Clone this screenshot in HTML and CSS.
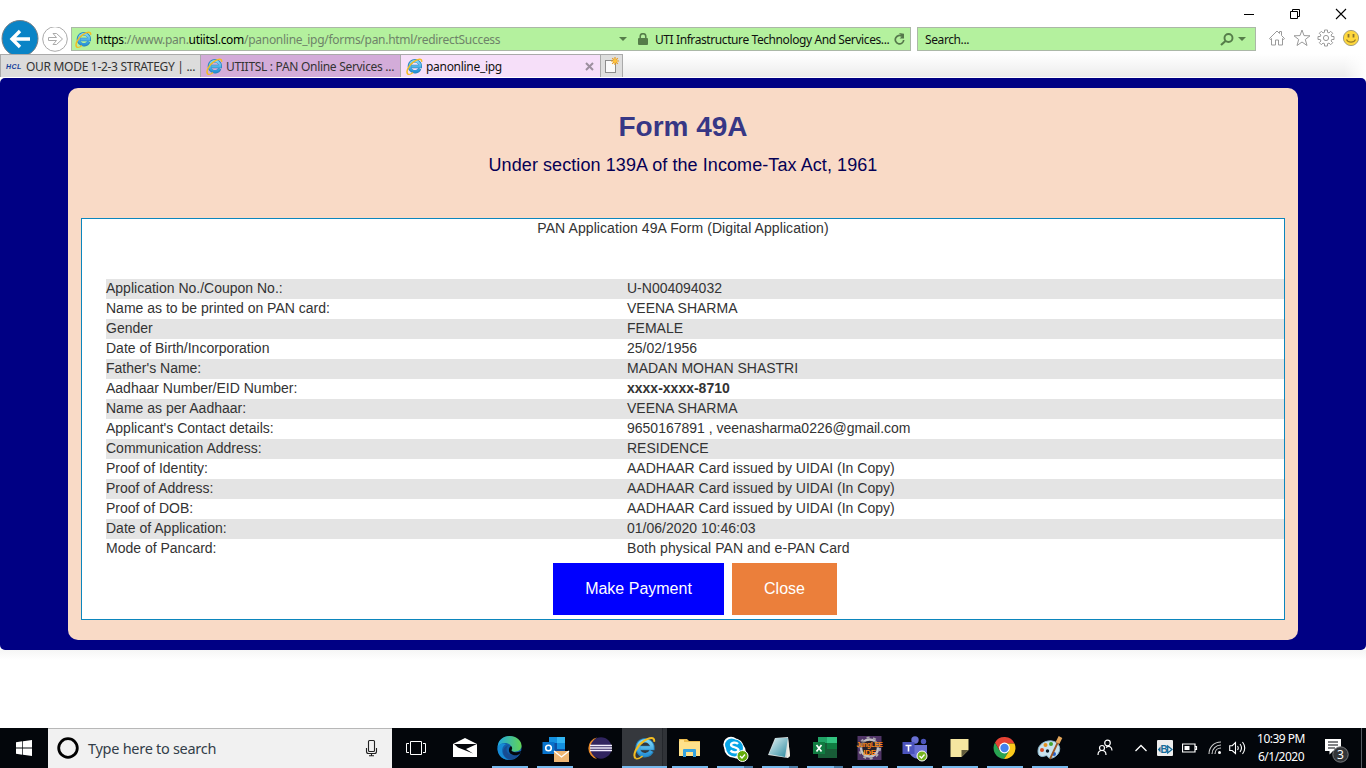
FILE: index.html
```html
<!DOCTYPE html>
<html lang="en">
<head>
<meta charset="utf-8">
<title>panonline_ipg</title>
<link rel="stylesheet" href="styles.css">
</head>
<body>
<svg class="defs" width="0" height="0">
  <defs>
    <linearGradient id="ieBlue" x1="0" y1="0" x2="0" y2="1"><stop offset="0" stop-color="#7fd6f7"/><stop offset="1" stop-color="#2a94d8"/></linearGradient>
    <linearGradient id="edgeA" x1="0" y1="0" x2="1" y2="0"><stop offset="0" stop-color="#20a8e0"/><stop offset="1" stop-color="#62d455"/></linearGradient>
    <linearGradient id="pad" x1="0" y1="0" x2="1" y2="1"><stop offset="0" stop-color="#e4f3f5"/><stop offset="1" stop-color="#2d8aa0"/></linearGradient>
    <symbol id="ie" viewBox="0 0 24 24">
      <path d="M19.500 15.200a7.800 7.800 0 1 1 .8-3.200H7" fill="none" stroke="#2484bd" stroke-width="4.600"/>
      <path d="M19 15.200a7.300 7.300 0 1 1 .9-3.200H7.500" fill="none" stroke="url(#ieBlue)" stroke-width="3.400"/>
      <path d="M3 23C-1 20 3.500 10 11 5 17 .8 23 0 22 5.500" fill="none" stroke="#f3bd22" stroke-width="2.100"/>
      <path d="M3 23c2 1 5-1 7-2.500" fill="none" stroke="#f3bd22" stroke-width="1.500"/>
    </symbol>
  </defs>
</svg>

<header class="chrome">
  <div class="window-controls">
    <svg width="12" height="12" viewBox="0 0 12 12"><path d="M1 6.500h10" stroke="#000"/></svg>
    <svg width="12" height="12" viewBox="0 0 12 12"><path d="M1.500 3.500h7v7h-7zM3.500 3.500v-2h7v7h-2" fill="none" stroke="#000"/></svg>
    <svg width="12" height="12" viewBox="0 0 12 12"><path d="M1 1l10 10M11 1L1 11" stroke="#000" stroke-width="1.100"/></svg>
  </div>

  <div class="nav">
    <svg class="back" width="40" height="34" viewBox="0 0 40 34"><circle cx="20" cy="18.500" r="18" fill="#0a84c6" stroke="#777f85" stroke-width="1"/><path d="M30 19H13M20 11l-8 8 8 8" fill="none" stroke="#fff" stroke-width="3.400"/></svg>
    <svg class="forward" width="31" height="27" viewBox="0 0 31 27"><circle cx="15" cy="12" r="12.300" fill="#fff" stroke="#aaa"/><path d="M8.500 10.500h8L13 6.500h3.500l6 5.500-6 5.500H13l3.500-4h-8z" fill="none" stroke="#aaa"/></svg>
    <div class="address">
      <svg class="fav" width="17" height="17"><use href="#ie" width="17" height="17"/></svg>
      <span class="url"><b>https</b>://www.pan.<b>utiitsl.com</b>/panonline_ipg/forms/pan.html/redirectSuccess</span>
      <svg class="caret" width="8" height="5" viewBox="0 0 8 5"><path d="M0 0h8L4 4z" fill="#557d49"/></svg>
      <svg class="lock" width="10" height="12" viewBox="0 0 10 12"><path d="M2.200 6V3.500a2.800 2.800 0 0 1 5.600 0V6" fill="none" stroke="#557d49" stroke-width="1.500"/><rect y="5" width="10" height="7" rx="1" fill="#557d49"/></svg>
      <span class="issuer">UTI Infrastructure Technology And Services...</span>
      <svg class="reload" width="11" height="13" viewBox="0 0 11 13"><path d="M8 3.300A4.200 4.200 0 1 0 9.700 7" fill="none" stroke="#55784b" stroke-width="1.700"/><path d="M5 0l5 .8V5.500H5.600L8 3.200z" fill="#55784b"/></svg>
    </div>
    <div class="search">
      <span class="search-label">Search...</span>
      <svg width="14" height="13" viewBox="0 0 14 13"><circle cx="8.500" cy="5" r="4" fill="none" stroke="#557d49" stroke-width="1.900"/><path d="M5.500 8L1 12" stroke="#557d49" stroke-width="2.200"/></svg>
      <svg class="search-caret" width="8" height="5" viewBox="0 0 8 5"><path d="M0 0h8L4 4z" fill="#557d49"/></svg>
    </div>
    <div class="tools">
      <svg width="18" height="18" viewBox="0 0 18 18"><path d="M1.500 9.500L9 2l2.500 2.500V2.500h2v4l3 3-.8 1-1.200-1v6.500h-4v-5h-3v5h-4V9.500l-1.200 1z" fill="#fff" stroke="#9a9a9a"/></svg>
      <svg width="18" height="18" viewBox="0 0 18 18"><path d="M9 1l2 5.600 6 .2-4.700 3.700L14 16.500l-5-3.500-5 3.500 1.700-6L1 6.800l6-.2z" fill="#fff" stroke="#9a9a9a"/></svg>
      <svg width="18" height="18" viewBox="0 0 18 18"><path d="M7.500 1h3v2.300l1.500.6 1.700-1.600 2 2-1.600 1.700.6 1.500H17v3h-2.300l-.6 1.500 1.600 1.700-2 2-1.700-1.600-1.500.6V17h-3v-2.300L6 14.100l-1.700 1.600-2-2L3.900 12l-.6-1.500H1v-3h2.300L3.900 6 2.300 4.300l2-2L6 3.900l1.500-.6z" fill="#fff" stroke="#9a9a9a"/><circle cx="9" cy="9" r="2.600" fill="none" stroke="#9a9a9a"/></svg>
      <svg width="18" height="18" viewBox="0 0 18 18"><circle cx="9" cy="9" r="7.600" fill="#ffd83d" stroke="#a6a07c"/><path d="M6.500 5v3.500M11.500 5v3.500" stroke="#8a7430" stroke-width="1.800"/><path d="M4.500 10.500c1.500 3.500 7.500 3.500 9 0" fill="none" stroke="#9a7c25" stroke-width="1.100"/></svg>
    </div>
  </div>

  <div class="tabs">
    <div class="tab tab-grey"><span class="hcl">HCL</span><span class="tab-text t1">OUR MODE 1-2-3 STRATEGY | ...</span></div>
    <div class="tab tab-purple"><svg width="17" height="17"><use href="#ie" width="17" height="17"/></svg><span class="tab-text t2">UTIITSL : PAN Online Services ...</span></div>
    <div class="tab tab-active"><svg width="17" height="17"><use href="#ie" width="17" height="17"/></svg><span class="tab-text t3">panonline_ipg</span><svg class="tab-close" width="9" height="9" viewBox="0 0 9 9"><path d="M1 1l7 7M8 1L1 8" stroke="#9c8f9e" stroke-width="2"/></svg></div>
    <div class="new-tab"><svg width="16" height="17" viewBox="0 0 16 17"><rect x="1.500" y="3.500" width="10" height="12" fill="#fafafa" stroke="#8d8d8d"/><path d="M11 0v8M7 4h8M8.200 1.200l5.600 5.600M13.800 1.200L8.200 6.800" stroke="#e79a1c" stroke-width="1.200"/><circle cx="11" cy="4" r="2" fill="#ffc43c"/></svg></div>
    <div class="tab-strip"></div>
  </div>
</header>

<main class="page">
  <section class="card">
    <h1>Form 49A</h1>
    <p class="subtitle">Under section 139A of the Income-Tax Act, 1961</p>
    <div class="panel">
      <p class="panel-title">PAN Application 49A Form (Digital Application)</p>
      <dl class="details">
        <div class="row"><dt>Application No./Coupon No.:</dt><dd>U-N004094032</dd></div>
        <div class="row"><dt>Name as to be printed on PAN card:</dt><dd>VEENA SHARMA</dd></div>
        <div class="row"><dt>Gender</dt><dd>FEMALE</dd></div>
        <div class="row"><dt>Date of Birth/Incorporation</dt><dd>25/02/1956</dd></div>
        <div class="row"><dt>Father's Name:</dt><dd>MADAN MOHAN SHASTRI</dd></div>
        <div class="row"><dt>Aadhaar Number/EID Number:</dt><dd class="strong">xxxx-xxxx-8710</dd></div>
        <div class="row"><dt>Name as per Aadhaar:</dt><dd>VEENA SHARMA</dd></div>
        <div class="row"><dt>Applicant's Contact details:</dt><dd>9650167891 , veenasharma0226@gmail.com</dd></div>
        <div class="row"><dt>Communication Address:</dt><dd>RESIDENCE</dd></div>
        <div class="row"><dt>Proof of Identity:</dt><dd>AADHAAR Card issued by UIDAI (In Copy)</dd></div>
        <div class="row"><dt>Proof of Address:</dt><dd>AADHAAR Card issued by UIDAI (In Copy)</dd></div>
        <div class="row"><dt>Proof of DOB:</dt><dd>AADHAAR Card issued by UIDAI (In Copy)</dd></div>
        <div class="row"><dt>Date of Application:</dt><dd>01/06/2020 10:46:03</dd></div>
        <div class="row"><dt>Mode of Pancard:</dt><dd class="mode">Both physical PAN and e-PAN Card</dd></div>
      </dl>
      <div class="actions">
        <button class="btn pay">Make Payment</button>
        <button class="btn close">Close</button>
      </div>
    </div>
  </section>
</main>

<div class="below"></div>

<footer class="taskbar">
  <div class="start"><svg width="16" height="16" viewBox="0 0 16 16"><path d="M0 2.200l6.300-.9v6.300H0zM7 1.200L16 0v7.600H7zM0 8.400h6.300v6.300L0 13.800zM7 8.400h9V16l-9-1.200z" fill="#fff"/></svg></div>
  <div class="task-search">
    <svg width="24" height="24" viewBox="0 0 24 24"><circle cx="12" cy="12" r="9.300" fill="none" stroke="#000" stroke-width="2.800"/></svg>
    <span class="task-search-text">Type here to search</span>
    <svg class="mic" width="13" height="18" viewBox="0 0 13 18"><rect x="3.500" y="1.500" width="6" height="11" rx="1" fill="none" stroke="#222" stroke-width="1.100"/><path d="M1.500 9v3.500q0 2 2 2h6q2 0 2-2V9M6.500 14.500v2.500M4 16.700h5" fill="none" stroke="#222" stroke-width="1.100"/></svg>
  </div>
  <div class="task view"><svg width="20" height="16" viewBox="0 0 20 16"><path d="M4.500 1.500h11v13h-11zM3 3.500H.5v9H3M17 3.500h2.500v9H17" fill="none" stroke="#fff"/></svg></div>
  <div class="task"><svg width="45" height="40" viewBox="0 0 45 40"><path d="M11 16l12-6 12 6v13H11z" fill="#fff"/><path d="M12 16h23L24 21l7 4.500-15-6z" fill="#05070c"/></svg></div>
  <div class="task open"><svg width="45" height="40" viewBox="0 0 45 40"><circle cx="22.500" cy="20" r="12" fill="#1160ab"/><path d="M10.700 19C11 12 16 8 22.500 8 30 8 35 13 34.500 18.500c-.5 5-7 6-10 4.500-1.500-1 1-2-.5-5-2-4-10-4.500-13.300 1z" fill="url(#edgeA)"/><path d="M19 16c-6 3-5 13 3 15.900C14 32 9.500 25 10.700 19c1-3 5-4.500 8.300-3z" fill="#168bd6"/><path d="M23 17c-5 1-5 9 2 10 3 .5 6-.8 8-2-4 8-13 8-16 2-2.500-5 1-10 6-10z" fill="#174c92"/><path d="M24 18c3 3-1 4 1.500 5.500 2 1.200 5 .8 9-.5L33 25.500c-2 2-6 2.500-9 .5-3-2-2.500-6.500 0-8z" fill="#05070c"/></svg></div>
  <div class="task open"><svg width="45" height="40" viewBox="0 0 45 40"><path d="M17 9h16v15H17z" fill="#0d4fa3"/><path d="M17 9h8v6h-8zM25 15h8v6h-8z" fill="#1490df"/><path d="M25 9h8v6h-8z" fill="#32b5f3"/><rect x="10.500" y="14" width="12" height="12" fill="#0873cc"/><circle cx="16.500" cy="20" r="2.800" fill="none" stroke="#fff" stroke-width="1.600"/><path d="M22 23h15v11H22z" fill="#efb774"/><path d="M22 23l7.500 6 7.500-6" fill="none" stroke="#fff" stroke-width="1.300"/></svg></div>
  <div class="task"><svg width="45" height="40" viewBox="0 0 45 40"><path d="M20 9.500a11 11 0 0 0 0 21.500c-7-5-7-17 0-21.500z" fill="#e98b2b"/><circle cx="24" cy="20" r="10.700" fill="#30245f"/><path d="M13 17.500h22M13 20h22M13 22.500h22" stroke="#f4efff" stroke-width="1.300"/></svg></div>
  <div class="task current"><svg width="28" height="28"><use href="#ie" x="2" y="2" width="23" height="24"/></svg></div>
  <div class="task open"><svg width="45" height="40" viewBox="0 0 45 40"><path d="M12 11h8l2 2h11v15H12z" fill="#edbd4f"/><path d="M13 12h4v2h16v14H12V14z" fill="#ffe18a"/><path d="M16 29v-7q0-1 1-1h11q1 0 1 1v7h-3v-5h-7v5z" fill="#36a3df"/></svg></div>
  <div class="task open stacked"><svg width="45" height="40" viewBox="0 0 45 40"><circle cx="19" cy="16.500" r="7.700" fill="#fff"/><circle cx="26" cy="23" r="7.700" fill="#fff"/><circle cx="22" cy="20" r="9.800" fill="#fff"/><circle cx="19.500" cy="17" r="6.500" fill="#08a5e7"/><circle cx="22.500" cy="20" r="8.500" fill="#08a5e7"/><path d="M26 16c-2-2.500-7-1.500-7 1s7.500 2 7.500 5-6 3-8 .5" fill="none" stroke="#fff" stroke-width="2.300"/><circle cx="30.500" cy="28" r="5.500" fill="#65ac0c" stroke="#fff"/><path d="M28 28l2 2 3-3.500" fill="none" stroke="#fff" stroke-width="1.300"/></svg></div>
  <div class="task open stacked"><svg width="45" height="40" viewBox="0 0 45 40"><path d="M18 10l13-1 2 19-2 2-20-3z" fill="#d6dddf"/><path d="M19 10h12l-3 19-16-3z" fill="url(#pad)"/><path d="M31 10l2 18-3 2z" fill="#f1eee2"/></svg></div>
  <div class="task open stacked"><svg width="45" height="40" viewBox="0 0 45 40"><path d="M16 9h19v21H16z" fill="#185c37"/><path d="M16 9h9v6h-9z" fill="#21a366"/><path d="M25 9h10v6H25z" fill="#33c481"/><path d="M25 15h10v6H25z" fill="#107c41"/><rect x="11" y="14" width="12" height="12" fill="#107c41"/><path d="M14.500 17l5 6.500M19.500 17l-5 6.500" stroke="#fff" stroke-width="1.700"/></svg></div>
  <div class="task open"><svg width="45" height="40" viewBox="0 0 45 40"><rect x="10.500" y="8" width="24" height="24" fill="#503567"/><circle cx="22.500" cy="20" r="8.500" fill="#24212b" stroke="#c3c1c4" stroke-width="2.500"/><circle cx="22.500" cy="20" r="10.500" fill="none" stroke="#aaa7ad" stroke-width="2" stroke-dasharray="3 3.600"/><path d="M11 13.500h23v6H11z" fill="#24212b" opacity=".6"/><text x="22.500" y="18.800" class="ide">JungLEE</text><text x="22.500" y="26.500" class="ide ide-big">IDE</text></svg></div>
  <div class="task open"><svg width="45" height="40" viewBox="0 0 45 40"><circle cx="23" cy="12" r="3.700" fill="#6970d3"/><circle cx="31.500" cy="13.500" r="2.700" fill="#4c55bd"/><path d="M18 17h11v12q-6 4-11-3zM29 17h6v7q-1 5-6 3z" fill="#6970d3"/><rect x="10.500" y="14" width="12" height="12" fill="#4b53bc"/><path d="M13.500 17.500h6M16.500 17.500v6" stroke="#fff" stroke-width="1.600"/><circle cx="30" cy="28" r="5" fill="#75b420" stroke="#fff"/><path d="M27.500 28l2 2 3-3.500" fill="none" stroke="#fff" stroke-width="1.300"/></svg></div>
  <div class="task open"><svg width="45" height="40" viewBox="0 0 45 40"><path d="M13.500 11h18v11l-7 7h-11z" fill="#f5e6a0"/><path d="M31.500 22h-7v7z" fill="#615b3b"/></svg></div>
  <div class="task open"><svg width="45" height="40" viewBox="0 0 45 40"><path d="M22.500 20l4.760 2.750L22 31A11 11 0 0 1 13 14.500l4.740 8.250z" fill="#29a352"/><path d="M13 14.500A11 11 0 0 1 32.500 15.500H22.500l-4.760 7.250z" fill="#e64335"/><path d="M22.500 15.500h10A11 11 0 0 1 22 31l5.200-8.200z" fill="#fbc91b"/><circle cx="22.500" cy="20" r="5.400" fill="#fff"/><circle cx="22.500" cy="20" r="4.200" fill="#4382ed"/></svg></div>
  <div class="task open"><svg width="45" height="40" viewBox="0 0 45 40"><path d="M11 23c0-7 8-11 14-10 8 1 10 9 5 14-4 4-8 4-9 2-1-3-4 0-6-.500-3-.5-4-2-4-5.500z" fill="#c8e2ee" stroke="#8bb8ce"/><circle cx="15" cy="22" r="2" fill="#db4b25"/><circle cx="18.500" cy="17" r="2" fill="#e39120"/><circle cx="24" cy="16" r="2" fill="#43a42e"/><circle cx="27" cy="26" r="2" fill="#275fc9"/><circle cx="20.500" cy="23" r="1.700" fill="#0b1a26"/><path d="M31 14l-8 17" stroke="#9b5724" stroke-width="1.800"/><path d="M33.500 9l-3 6" stroke="#e4a65b" stroke-width="4"/></svg></div>

  <div class="tray">
    <svg class="people" width="16" height="18" viewBox="0 0 16 18"><circle cx="10.500" cy="4" r="2.800" fill="none" stroke="#fff" stroke-width="1.200"/><circle cx="5" cy="9" r="2.500" fill="none" stroke="#fff" stroke-width="1.200"/><path d="M1 16c0-6 8-6 8 0M9 8.500c3-2.500 6-.5 6 3" fill="none" stroke="#fff" stroke-width="1.200"/></svg>
    <svg class="chev" width="14" height="8" viewBox="0 0 14 8"><path d="M1.500 7L7 1.500 12.500 7" fill="none" stroke="#fff" stroke-width="1.300"/></svg>
    <svg class="bd" width="16" height="16" viewBox="0 0 16 16"><rect width="16" height="16" rx="1" fill="#eee"/><path d="M3.500 6.500L.8 9.500l2.700 3z" fill="#176b99"/><path d="M10.700 6l4.300 3.500-4.300 3.500z" fill="none" stroke="#176b99" stroke-width="1.300"/><text x="7" y="13" class="bd-b">B</text></svg>
    <svg class="bat" width="16" height="10" viewBox="0 0 16 10"><path d="M.5 1h12.500v8H.5zM13 3.500h1.500v3H13" fill="none" stroke="#fff" stroke-width="1.200"/><path d="M2.500 3h5v4h-5z" fill="#fff"/></svg>
    <svg class="wifi" width="14" height="14" viewBox="0 0 14 14"><path d="M1 13C1 6 6 1 13 1M4 13c0-5 4-9 9-9M7 13c0-3.500 2.500-6 6-6" fill="none" stroke="#d0d0d0" stroke-width="1.100"/><circle cx="11.500" cy="11.500" r="1.500" fill="#fff"/></svg>
    <svg class="vol" width="17" height="14" viewBox="0 0 17 14"><path d="M.7 4.700h2.500L6.500 1.500v11L3.200 9.500H.7zM8.500 5q1.500 2 0 4M11 3q3 4 0 8M13.500 1q4.500 6 0 12" fill="none" stroke="#fff" stroke-width="1.100"/></svg>
    <div class="clock"><span>10:39 PM</span><span>6/1/2020</span></div>
    <svg class="notice" width="26" height="26" viewBox="0 0 26 26"><path d="M1 2h16v12H9l-3.500 3.500V14H1z" fill="#fff"/><path d="M4 5h10M4 8h10M4 11h7" stroke="#05070c" stroke-width="1.100"/><circle cx="16.500" cy="17.500" r="7.700" fill="#333538" stroke="#77797c"/><text x="16.500" y="21.700" class="count">3</text></svg>
    <span class="desktop-edge"></span>
  </div>
</footer>
</body>
</html>
```

FILE: styles.css
```css
* { box-sizing: border-box; }
body { margin: 0; width: 1366px; height: 768px; overflow: hidden; display: flex; flex-direction: column; background: #fff; font-family: "Liberation Sans", Arial, sans-serif; }
svg { display: block; flex: none; }
.defs { position: absolute; }
h1, p, dl, dd { margin: 0; }

.chrome { height: 78px; display: flex; flex-direction: column; font-family: "Noto Sans", sans-serif; font-size: 12px; color: #111; white-space: nowrap; }
.window-controls { height: 27px; display: flex; justify-content: flex-end; gap: 34px 34px; padding: 8px 19px 0 0; }
.nav { height: 27px; display: flex; align-items: flex-start; }
.back { margin-top: -7px; }
.address { width: 840px; height: 24px; display: flex; align-items: center; border: 1px solid #abb8a7; background: #b4f19e; padding-left: 3px; }
.url { width: 405px; margin-left: 4px; color: #6e8369; letter-spacing: -0.285px; }
.url b { font-weight: 400; color: #000; }
.caret { margin: 1px 0 0 118px; }
.lock { margin-left: 11px; }
.issuer { width: 238px; margin-left: 7px; letter-spacing: -0.410px; }
.reload { margin-left: 1px; }
.search { width: 339px; height: 24px; margin-left: 6px; border: 1px solid #abb8a7; background: #b4f19e; display: flex; align-items: center; padding-left: 7px; }
.search-label { width: 295px; letter-spacing: -0.400px; }
.search-caret { margin-left: 4px; }
.tools { display: flex; gap: 6.500px; margin: 2px 0 0 12px; }

.tabs { height: 24px; display: flex; padding-bottom: 1px; }
.tab { width: 200px; display: flex; align-items: center; border-top: 1px solid #aaa; border-right: 1px solid #aaa; padding-left: 5px; color: #333; }
.tab-grey { width: 201px; background: #dcdcdc; border-left: 1px solid #aaa; }
.tab-purple { background: #d3acd9; }
.tab-active { background: #f6dff9; color: #111; }
.hcl { width: 17px; font: italic 700 7px "Liberation Sans", sans-serif; color: #17429b; letter-spacing: 0.400px; }
.tab-text { margin-left: 3px; letter-spacing: -0.300px; }
.t1 { width: 172px; }
.t3 { width: 159px; }
.new-tab { width: 22px; border-top: 1px solid #aaa; border-right: 1px solid #aaa; background: #dedede; padding: 2px 0 0 3px; }
.tab-strip { flex: 1; background: linear-gradient(to right, transparent 97%, #fff), linear-gradient(#fff, #ececec); }

.page { height: 572px; background: #000084; border-radius: 5px; padding: 10px 68px; }
.card { height: 552px; background: #f9dac6; border-radius: 10px; padding: 21px 13px 0; text-align: center; }
h1 { font-size: 28px; line-height: 36px; color: #373785; }
.subtitle { margin-top: 7px; font-size: 18px; line-height: 26px; color: #050055; letter-spacing: 0.080px; }
.panel { height: 402px; margin-top: 40px; background: #fff; border: 1px solid #0c86bd; color: #333; font-size: 14px; line-height: 18px; }
.panel-title { letter-spacing: 0.080px; }
.details { margin: 42px 0 0 24px; text-align: left; }
.row { height: 20px; display: grid; grid-template-columns: 521px 1fr; }
.row:nth-child(odd) { background: #e4e4e4; }
.strong { font-weight: 700; }
.mode { letter-spacing: 0.070px; }
.actions { display: flex; gap: 8px; margin: 4px 0 0 471px; }
.btn { height: 52px; padding: 0; border: 0; color: #fff; font: 16px "Liberation Sans", Arial, sans-serif; }
.pay { width: 171px; background: #0000ff; }
.close { width: 105px; background: #eb7f3b; }
.below { height: 78px; background: linear-gradient(#f5f5f5, #fff 10px); }

.taskbar { height: 40px; display: flex; background: #03060b; font-family: "Noto Sans", sans-serif; }
.start { width: 48px; display: flex; align-items: center; justify-content: center; }
.task-search { width: 344px; display: flex; align-items: center; background: #f1f1f1; border-top: 1px solid #b7b7b7; padding: 0 0 1px 8px; }
.task-search-text { width: 277px; margin-left: 8px; font-size: 14.500px; letter-spacing: -0.280px; color: #333e49; white-space: nowrap; }
.task { width: 45px; height: 40px; display: flex; align-items: center; justify-content: center; flex: none; }
.view { width: 50px; padding-right: 2px; }
.open { background: linear-gradient(#76b9ed, #76b9ed) 5px 100% / 36px 2px no-repeat; }
.stacked { background: linear-gradient(to right, #76b9ed 27px, #4b7da7 27px) 5px 100% / 36px 2px no-repeat; }
.current { background: linear-gradient(#76b9ed, #76b9ed) 0 100% / 100% 2px no-repeat, linear-gradient(to right, #35383d 40px, #171a1f 40px, #303338 41px); }
.ide { font: 700 6.500px "Liberation Sans", sans-serif; fill: #ff8b19; text-anchor: middle; letter-spacing: -0.300px; }
.ide-big { font-size: 8px; }
.tray { flex: 1; display: flex; align-items: center; padding-left: 25px; }
.chev { margin-left: 21px; }
.bd { margin-left: 9px; }
.bd-b { font: 700 10px "Liberation Sans", sans-serif; fill: #176b99; text-anchor: middle; }
.bat { margin-left: 9px; }
.wifi { margin-left: 10px; }
.vol { margin-left: 7px; }
.clock { width: 54px; margin-left: 8px; display: flex; flex-direction: column; align-items: center; color: #fff; font-size: 12px; line-height: 18px; letter-spacing: -0.500px; white-space: nowrap; }
.notice { margin: 3px 0 0 16px; }
.count { font: 12px "Noto Sans", sans-serif; fill: #fff; text-anchor: middle; }
.desktop-edge { width: 1px; height: 40px; margin-left: 11px; background: #555b62; }
```
